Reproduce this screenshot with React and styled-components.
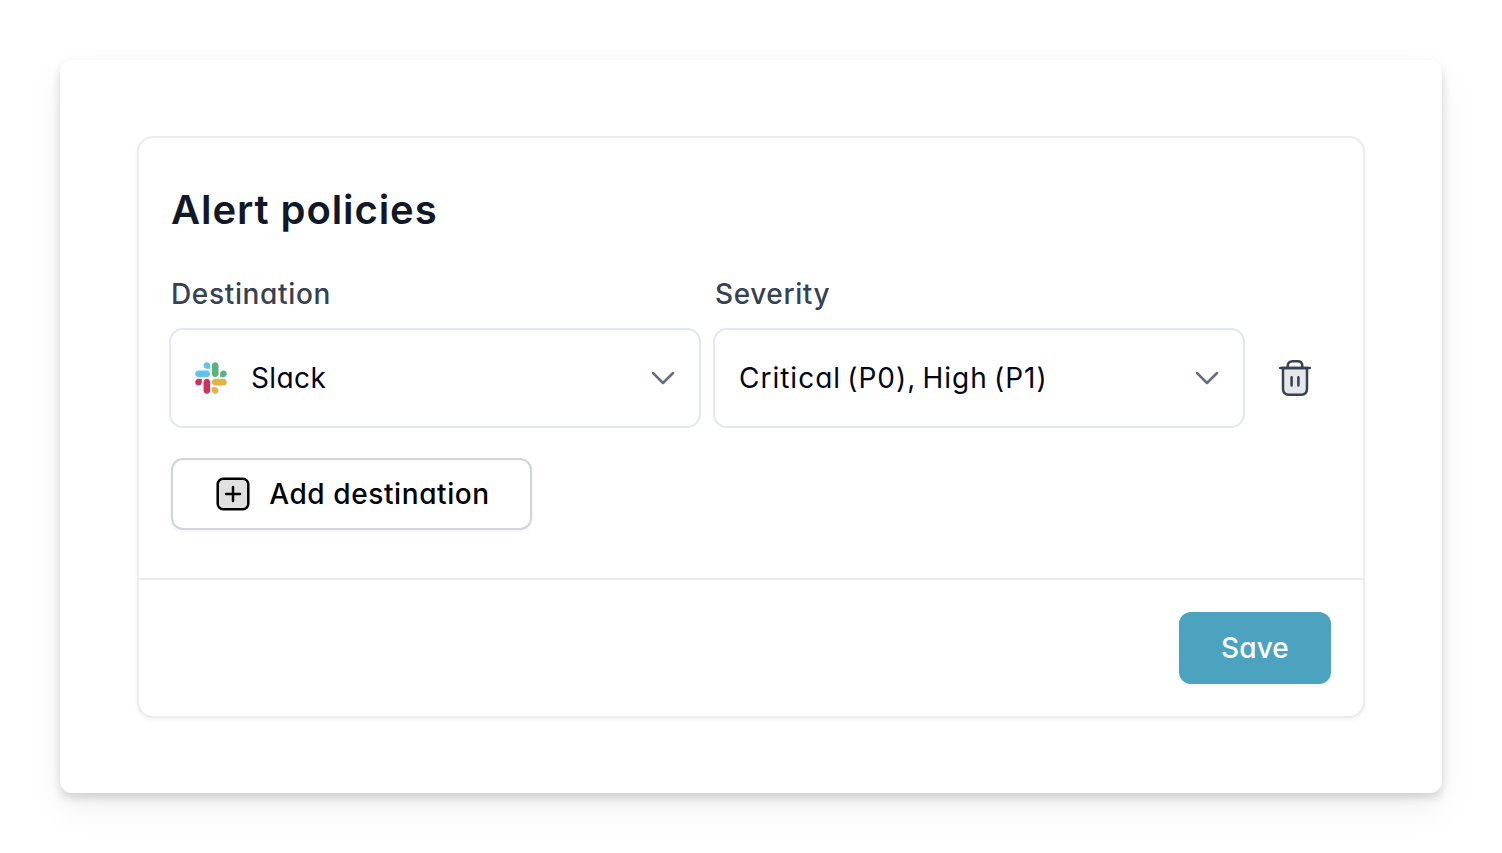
import React from "react";
import styled, { createGlobalStyle } from "styled-components";

const GlobalStyle = createGlobalStyle`
  *, *::before, *::after { box-sizing: border-box; }
  body {
    margin: 0;
    background: #fff;
    font-family: Inter, "Liberation Sans", sans-serif;
    font-feature-settings: "cv11" 1;
    -webkit-font-smoothing: antialiased;
  }
`;

const Page = styled.main`
  width: 1502px;
  height: 853px;
  padding: 60px;
  overflow: hidden;
`;

const Panel = styled.section`
  height: 733px;
  padding: 76px 77px 75px;
  background: #fff;
  border-radius: 12px;
  box-shadow: 0 5px 10px rgba(0, 0, 0, 0.15), 0 15px 36px rgba(0, 0, 0, 0.06);
`;

const Card = styled.form`
  display: flex;
  flex-direction: column;
  height: 582px;
  border: 2px solid #ebebf0;
  border-radius: 16px;
  background: #fff;
  box-shadow: 0 2px 4px rgba(0, 0, 0, 0.05);
`;

const CardBody = styled.div`
  display: flex;
  flex-direction: column;
  align-items: flex-start;
  flex: 1;
  padding: 44px 32px 0;
`;

const CardFooter = styled.footer`
  display: flex;
  justify-content: flex-end;
  height: 138px;
  padding: 32px;
  border-top: 2px solid #ebebf0;
`;

const Title = styled.h2`
  margin: 0 0 36px;
  font-size: 40px;
  line-height: 56px;
  font-weight: 600;
  letter-spacing: ${({ $tracking }) => $tracking};
  color: #111827;
`;

const PolicyRow = styled.div`
  display: flex;
  align-items: flex-end;
  gap: 12px;
  margin: 0 0 30px -2px;
`;

const Field = styled.div`
  display: flex;
  flex-direction: column;
  gap: 14px;
  width: 532px;
`;

const Label = styled.span`
  height: 40px;
  padding-left: 2px;
  font-size: 28px;
  line-height: 40px;
  font-weight: 500;
  letter-spacing: ${({ $tracking }) => $tracking};
  color: #374151;
`;

const Select = styled.button`
  display: flex;
  align-items: center;
  width: 100%;
  height: 100px;
  padding: 0 24px;
  border: 2px solid #e2e8f0;
  border-radius: 14px;
  background: #fff;
  color: #020617;
  font: inherit;
  font-feature-settings: inherit;
  text-align: left;
`;

const SelectText = styled.span`
  flex: 1;
  font-size: 28px;
  line-height: 40px;
  letter-spacing: ${({ $tracking }) => $tracking};
  word-spacing: ${({ $wordGap }) => $wordGap || "0"};
  white-space: nowrap;
`;

const SlackMark = styled.svg`
  width: 32px;
  height: 32px;
  margin-right: 24px;
`;

const Chevron = styled.svg`
  width: 24px;
  height: 14px;
`;

const RemoveButton = styled.button`
  display: flex;
  align-items: center;
  height: 100px;
  margin-left: 22px;
  padding: 0;
  border: 0;
  background: none;
  color: #374151;
`;

const Button = styled.button`
  display: flex;
  align-items: center;
  justify-content: center;
  width: ${({ $width }) => $width};
  height: 72px;
  padding: 0 0 0 ${({ $primary }) => ($primary ? "0" : "3px")};
  border: 2px solid ${({ $primary }) => ($primary ? "#4ba3c0" : "#d1d5db")};
  border-radius: 12px;
  background: ${({ $primary }) => ($primary ? "#4ba3c0" : "#fff")};
  box-shadow: 0 2px 4px rgba(0, 0, 0, 0.05);
  color: ${({ $primary }) => ($primary ? "#fff" : "#000")};
  font: inherit;
  font-feature-settings: inherit;
  font-size: 28px;
  font-weight: 500;
  letter-spacing: ${({ $tracking }) => $tracking};
  white-space: nowrap;
`;

const PlusMark = styled.svg`
  width: 34px;
  height: 34px;
  margin-right: 19px;
`;

function SlackIcon() {
  return (
    <SlackMark viewBox="0 0 127 127" aria-hidden="true">
      <path fill="#d0315c" d="M27.2 80c0 7.3-5.9 13.2-13.2 13.2S.8 87.3.8 80s5.9-13.2 13.2-13.2h13.2V80zm6.6 0c0-7.3 5.9-13.2 13.2-13.2s13.2 5.9 13.2 13.2v33c0 7.3-5.9 13.2-13.2 13.2s-13.2-5.9-13.2-13.2V80z" />
      <path fill="#60c3ee" d="M47 27c-7.3 0-13.2-5.9-13.2-13.2S39.7.6 47 .6s13.2 5.9 13.2 13.2V27H47zm0 6.7c7.3 0 13.2 5.9 13.2 13.2S54.3 60.1 47 60.1H13.9C6.6 60.1.7 54.2.7 46.9s5.9-13.2 13.2-13.2H47z" />
      <path fill="#57b37f" d="M99.9 46.9c0-7.3 5.9-13.2 13.2-13.2s13.2 5.9 13.2 13.2-5.9 13.2-13.2 13.2H99.9V46.9zm-6.6 0c0 7.3-5.9 13.2-13.2 13.2s-13.2-5.9-13.2-13.2V13.8C66.9 6.5 72.8.6 80.1.6s13.2 5.9 13.2 13.2v33.1z" />
      <path fill="#e5b248" d="M80.1 99.8c7.3 0 13.2 5.9 13.2 13.2s-5.9 13.2-13.2 13.2-13.2-5.9-13.2-13.2V99.8h13.2zm0-6.6c-7.3 0-13.2-5.9-13.2-13.2s5.9-13.2 13.2-13.2h33.1c7.3 0 13.2 5.9 13.2 13.2s-5.9 13.2-13.2 13.2H80.1z" />
    </SlackMark>
  );
}

function ChevronIcon() {
  return (
    <Chevron viewBox="0 0 24 14" fill="none" aria-hidden="true">
      <path d="M2 2L12 12L22 2" stroke="#646d82" strokeWidth="2.5" strokeLinecap="round" strokeLinejoin="round" />
    </Chevron>
  );
}

function TrashIcon() {
  return (
    <svg width="32" height="36" viewBox="0 0 32 36" fill="none" stroke="currentColor" strokeWidth="2.5" aria-hidden="true">
      <path d="M4 8H28V28.5C28 32.5 26 34.7 22 34.7H10C6 34.7 4 32.5 4 28.5Z" fill="#e6e7ea" />
      <path d="M8.700 8V6C8.700 3 10.600 1.300 13.500 1.300H18.500C21.400 1.300 23.300 3 23.300 6V8" />
      <path d="M1.200 8H30.800M12.600 17.200V25.600M19.400 17.200V25.600" strokeLinecap="round" />
    </svg>
  );
}

function PlusIcon() {
  return (
    <PlusMark viewBox="0 0 34 34" fill="none" stroke="#000" strokeWidth="2.5" aria-hidden="true">
      <rect x="1.7" y="1.7" width="30.6" height="30.6" rx="5.5" fill="#e0e0e0" />
      <path d="M17 10V24M10 17H24" strokeLinecap="round" />
    </PlusMark>
  );
}

export default function App() {
  return (
    <>
      <GlobalStyle />
      <Page>
        <Panel>
          <Card onSubmit={(event) => event.preventDefault()}>
            <CardBody>
              <Title $tracking="0.92px">Alert policies</Title>
              <PolicyRow>
                <Field>
                  <Label $tracking="0.66px">Destination</Label>
                  <Select type="button">
                    <SlackIcon />
                    <SelectText $tracking="0.4px">Slack</SelectText>
                    <ChevronIcon />
                  </Select>
                </Field>
                <Field>
                  <Label $tracking="0.6px">Severity</Label>
                  <Select type="button">
                    <SelectText $tracking="1px" $wordGap="-2.7px">Critical (P0), High (P1)</SelectText>
                    <ChevronIcon />
                  </Select>
                </Field>
                <RemoveButton type="button" aria-label="Remove destination">
                  <TrashIcon />
                </RemoveButton>
              </PolicyRow>
              <Button type="button" $width="361px" $tracking="0.6px">
                <PlusIcon />
                Add destination
              </Button>
            </CardBody>
            <CardFooter>
              <Button type="submit" $primary $width="152px" $tracking="0.1px">Save</Button>
            </CardFooter>
          </Card>
        </Panel>
      </Page>
    </>
  );
}
